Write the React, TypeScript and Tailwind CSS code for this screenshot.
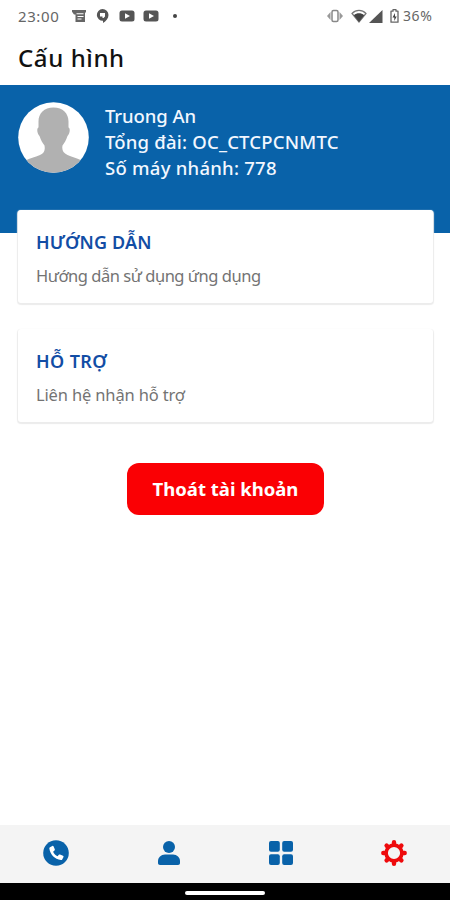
import { ReactNode } from "react";

const cards = [
  {
    title: "HƯỚNG DẪN",
    text: "Hướng dẫn sử dụng ứng dụng",
    className: "h-[93px]",
    titleClass: "tracking-[0.15px]",
    textClass: "tracking-[-0.47px]",
  },
  {
    title: "HỖ TRỢ",
    text: "Liên hệ nhận hỗ trợ",
    className: "h-[93px] mt-[26px]",
    titleClass: "tracking-[0.4px]",
    textClass: "tracking-[-0.15px]",
  },
];

const YoutubeIcon = () => (
  <svg width="16" height="12" viewBox="0 0 16 12">
    <rect x="0.5" y="0.5" width="15" height="11" rx="2.5" fill="#555" />
    <path d="M6 3.2 11 6 6 8.8Z" fill="#fff" />
  </svg>
);

const StatusBar = () => (
  <div className="flex h-8 items-center justify-between pl-[18px] pr-[17px] text-[#666]">
    <div className="flex items-center">
      <span className="w-[54px] whitespace-nowrap text-[15px] leading-8 tracking-[0.6px]">
        23:00
      </span>
      <svg width="14" height="12" viewBox="0 0 14 12" fill="#666">
        <path d="M0 0h14v2.5h-1V12H3.5V4.5H2L0 1.8Z" />
        <path d="M4.5 3.2h7v1h-7zM5.5 6h6v1h-6zM5.5 8.5h4v1h-4z" fill="#fff" />
      </svg>
      <svg className="ml-[10px]" width="13" height="14" viewBox="0 0 13 14">
        <path
          d="M6.5 0a6 6 0 0 1 6 6c0 3.5-2.5 6-5.5 8v-2.200A5.900 5.900 0 1 1 6.500 0Z"
          fill="#555"
        />
        <path d="M4 4h5v3.500L7.500 9H6.500V7.500H4z" fill="#fff" />
      </svg>
      <span className="ml-[10px]">
        <YoutubeIcon />
      </span>
      <span className="ml-2">
        <YoutubeIcon />
      </span>
      <span className="ml-[14px] h-1 w-1 rounded-full bg-[#444]" />
    </div>
    <div className="flex items-center">
      <svg width="16" height="14" viewBox="0 0 16 14">
        <path d="M3.500 3 0 7l3.500 4ZM12.500 3 16 7l-3.500 4Z" fill="#999" />
        <rect x="5" y="1.500" width="6" height="11" rx="1.500" fill="none" stroke="#888" strokeWidth="1.500" />
      </svg>
      <svg className="ml-2" width="16" height="14" viewBox="0 0 16 14">
        <path d="M1 4.500C5 .4 11 .4 15 4.500L8 13Z" fill="#fff" stroke="#777" strokeWidth="1.200" />
        <path d="M2.800 6.200c3.200-2.500 7.200-2.500 10.400 0L8 13Z" fill="#444" />
      </svg>
      <svg className="ml-[2px]" width="14" height="13" viewBox="0 0 14 13">
        <path d="M13.500 0v13H0Z" fill="#555" />
      </svg>
      <svg className="ml-[7px]" width="9" height="14" viewBox="0 0 9 14">
        <path
          d="M3 .7h3v1.500h2v11H1v-11h2Z"
          fill="none"
          stroke="#666"
          strokeWidth="1.300"
          strokeLinejoin="round"
        />
        <path d="M5 4 2.500 8.500h1.800V12l2.400-4.600H5Z" fill="#444" />
      </svg>
      <span className="ml-[4px] w-[30px] whitespace-nowrap text-[14px] leading-8 tracking-[0.6px]">
        36%
      </span>
    </div>
  </div>
);

const Avatar = () => (
  <svg width="71" height="71" viewBox="0 0 71 71">
    <clipPath id="avatar">
      <circle cx="35.500" cy="35.500" r="35.300" />
    </clipPath>
    <g clipPath="url(#avatar)">
      <rect width="71" height="71" fill="#fff" />
      <path
        d="M35.500 5.500c9.500 0 15 6 15 14v6c2 .5 1.500 6-1 8.500-1.500 4.500-3 7-5 9.500-.8 4.500.5 7.500 5 9.500 5 2.200 10 3.500 14 5.500v14h-56v-14c4-2 9.500-3.300 14.500-5.500 4.500-2 5.300-5 4.500-9.500-2-2.500-3.500-5-5-9.500-2.500-2.500-3-8-1-8.500v-6c0-8 5.500-14 15-14Z"
        fill="#b1b1b1"
      />
    </g>
  </svg>
);

const NavItem = ({ children }: { children: ReactNode }) => (
  <button className="flex w-[112.500px] shrink-0 items-center justify-center">{children}</button>
);

const BottomNav = () => (
  <nav className="flex h-[58px] justify-center overflow-hidden bg-[#f4f4f4] pb-[3px] text-[#0962a9]">
    <NavItem>
      <svg width="26" height="26" viewBox="0 0 26 26">
        <circle cx="13" cy="13" r="12.800" fill="currentColor" />
        <path
          d="m7 7.200 2.300-1.300c.5-.2 1 0 1.200.4l1.300 3c.2.500 0 .900-.3 1.200l-1.400 1.200c1 2.100 2.400 3.600 4.500 4.500l1.200-1.400c.3-.4.800-.5 1.200-.3l3 1.300c.5.2.7.700.5 1.200l-1.300 2.400c-.2.500-.7.700-1.200.6C11.600 19.200 7.100 14.600 6.300 8.300c0-.5.200-.9.700-1.100Z"
          fill="#fff"
        />
      </svg>
    </NavItem>
    <NavItem>
      <svg width="22" height="24" viewBox="0 0 22 24" fill="currentColor">
        <circle cx="11" cy="6" r="6" />
        <path d="M7 13.500h8c4 0 7 3 7 6.500v2c0 1.200-.8 2-2 2H2c-1.200 0-2-.8-2-2v-2c0-3.500 3-6.500 7-6.500Z" />
      </svg>
    </NavItem>
    <NavItem>
      <svg width="24" height="24" viewBox="0 0 24 24" fill="currentColor">
        <rect width="10.800" height="10.800" rx="2" />
        <rect x="13.200" width="10.800" height="10.800" rx="2" />
        <rect y="13.200" width="10.800" height="10.800" rx="2" />
        <rect x="13.200" y="13.200" width="10.800" height="10.800" rx="2" />
      </svg>
    </NavItem>
    <NavItem>
      <svg width="26" height="26" viewBox="0 0 26 26" fill="none" stroke="#ee0a0c">
        <circle cx="13" cy="13" r="7.900" strokeWidth="3.600" />
        <path
          d="M13 2.300v2M13 21.700v2M2.300 13h2M21.700 13h2M5.600 5.600l1.400 1.400M19 19l1.400 1.400M5.600 20.400 7 19M19 7l1.400-1.400"
          strokeWidth="4.400"
          strokeLinecap="round"
        />
      </svg>
    </NavItem>
  </nav>
);

export default function App() {
  return (
    <div className="flex h-[900px] w-[450px] flex-col overflow-hidden bg-white font-['Noto_Sans',sans-serif]">
      <StatusBar />
      <header className="h-[53px] pl-[18px]">
        <h1 className="whitespace-nowrap text-[24px] font-medium leading-[51px] text-[#111]">
          <span className="tracking-[0.6px]">Cấu hình</span>
        </h1>
      </header>

      <section className="flex h-[148px] shrink-0 items-start bg-[#0962a9] pl-[18px] pt-[17px]">
        <Avatar />
        <div className="ml-4 mt-px flex flex-col items-start whitespace-nowrap text-[18.500px] font-medium leading-[26px] text-[#f2f7ff]">
          <span className="tracking-[-0.1px]">Truong An</span>
          <span className="tracking-[0.2px]">Tổng đài: OC_CTCPCNMTC</span>
          <span className="tracking-[0.25px]">Số máy nhánh: 778</span>
        </div>
      </section>

      <main className="-mt-[23px] flex flex-1 flex-col pl-[18px] pr-[17px]">
        {cards.map((card) => (
          <div
            key={card.title}
            className={`${card.className} flex shrink-0 flex-col items-start whitespace-nowrap rounded-[3px] bg-white pl-[18px] pt-[18px] shadow-[0_1px_1px_1px_#ececec]`}
          >
            <h2 className="text-[18px] font-semibold leading-7 text-[#124da5]">
              <span className={card.titleClass}>{card.title}</span>
            </h2>
            <p className="mt-[6px] text-[16.500px] leading-7 text-[#737373]">
              <span className={card.textClass}>{card.text}</span>
            </p>
          </div>
        ))}
        <button className="mt-[41px] flex h-[52px] w-[197px] shrink-0 items-center justify-center self-center whitespace-nowrap rounded-[12px] bg-[#fa0004] pb-px text-[18.500px] font-bold text-white">
          <span className="tracking-[0px]">Thoát tài khoản</span>
        </button>
      </main>

      <BottomNav />
      <div className="flex h-[17px] items-center justify-center bg-black pt-[2px]">
        <div className="h-1 w-20 rounded-full bg-white" />
      </div>
    </div>
  );
}
